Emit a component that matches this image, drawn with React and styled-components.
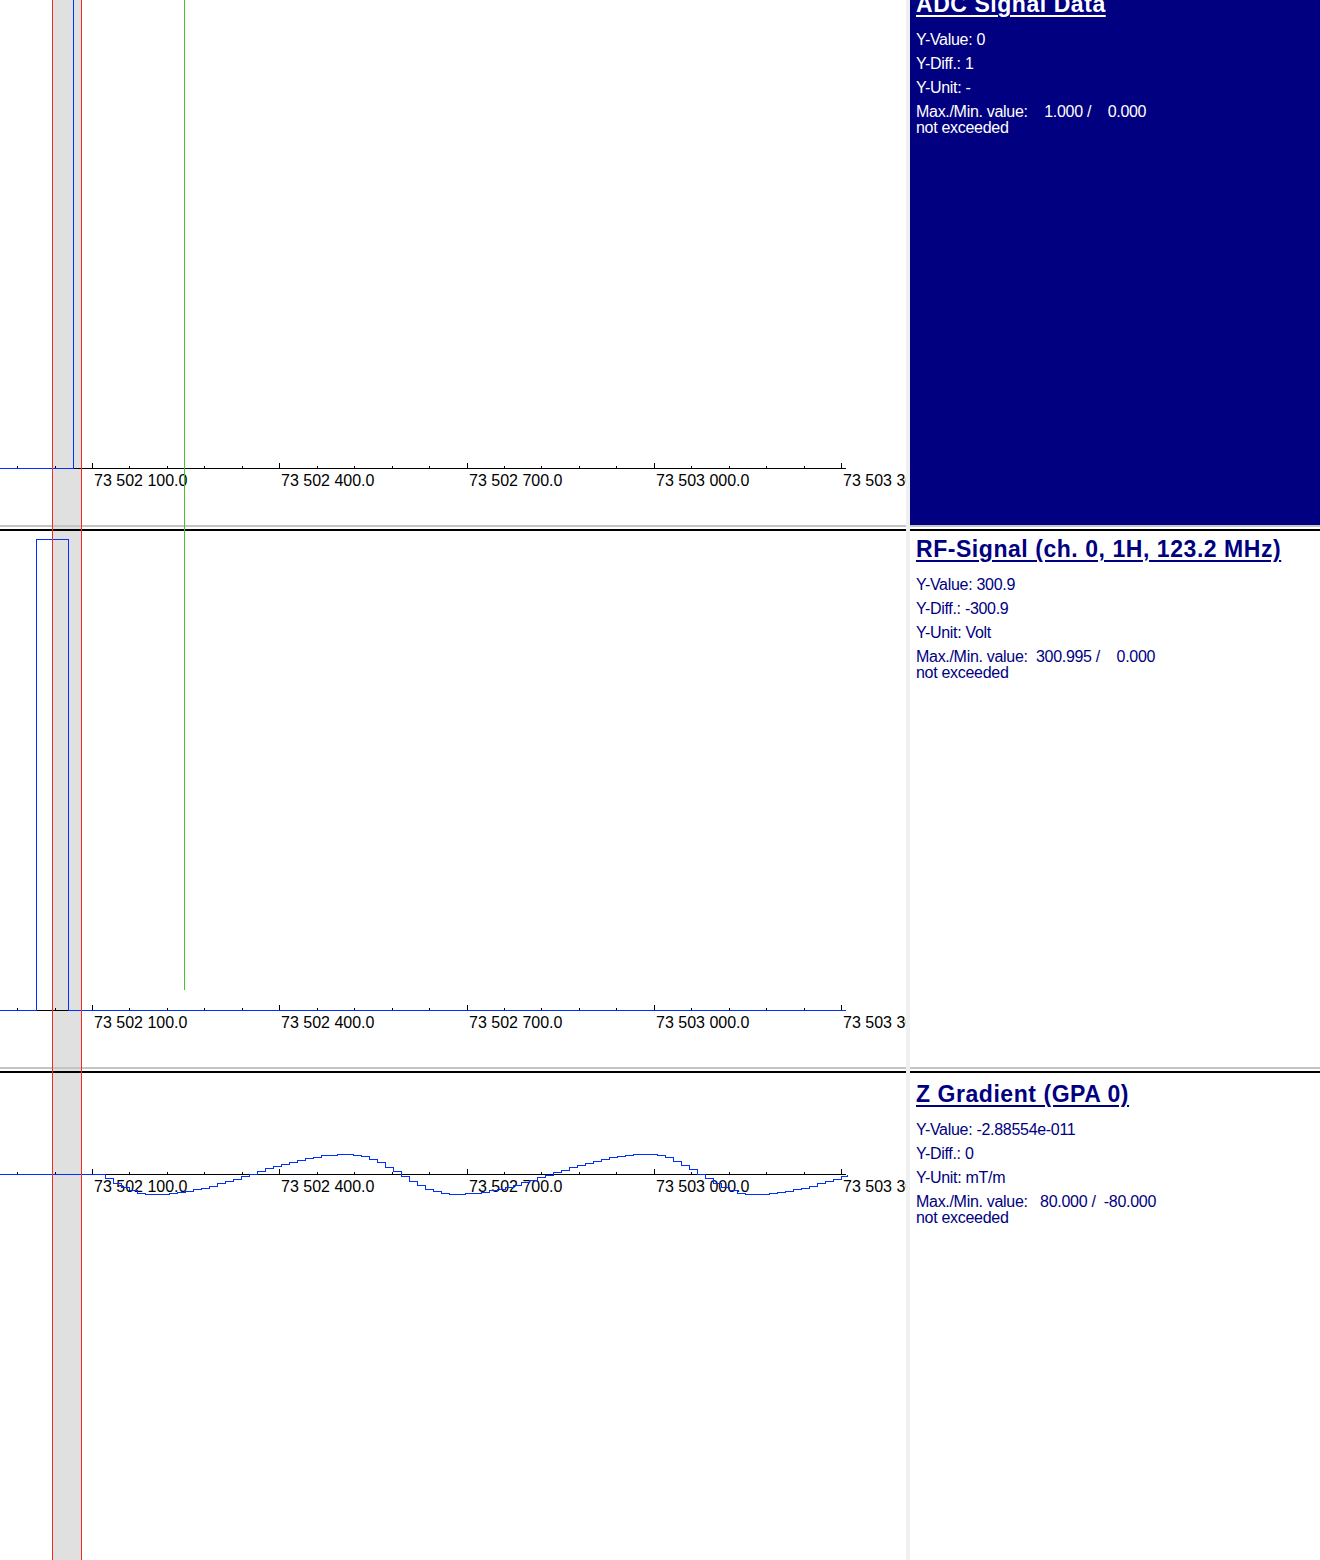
import React from 'react'
import styled, { createGlobalStyle } from 'styled-components'

const GlobalStyle = createGlobalStyle`
  html, body {
    margin: 0;
    padding: 0;
    background: #ffffff;
  }
  body {
    font-family: 'Liberation Sans', Arial, sans-serif;
  }
`

const NAVY = '#000080'
const SIGNAL = '#0030ff'

const Screen = styled.div`
  display: flex;
  width: 1320px;
  height: 1560px;
  overflow: hidden;
  background: #ffffff;
`

const PlotColumn = styled.div`
  position: relative;
  display: flex;
  flex-direction: column;
  width: 906px;
  flex: none;
  overflow: hidden;
  background: #ffffff;
`

const Splitter = styled.div`
  width: 4px;
  flex: none;
  background: #f0f0f0;
`

const InfoColumn = styled.div`
  display: flex;
  flex-direction: column;
  flex: 1;
  background: #ffffff;
`

const CursorBand = styled.div`
  position: absolute;
  top: 0;
  bottom: 0;
  left: 53px;
  width: 28px;
  background: #e0e0e0;
  z-index: 0;
`

const CursorLine = styled.div`
  position: absolute;
  top: 0;
  left: ${p => p.$x}px;
  width: 1px;
  height: ${p => (p.$h ? `${p.$h}px` : '100%')};
  background: ${p => p.$color};
  z-index: 2;
`

const PlotPane = styled.div`
  position: relative;
  z-index: 1;
  height: ${p => (p.$h ? `${p.$h}px` : 'auto')};
  flex: ${p => (p.$h ? 'none' : '1')};
  overflow: hidden;
`

const Separator = styled.div`
  position: relative;
  z-index: 1;
  height: 2px;
  flex: none;
  border-top: 2px solid #c4c4c4;
  border-bottom: 2px solid #000000;
`

const ChartSvg = styled.svg`
  display: block;
`

const AxisLabel = styled.text`
  font-family: 'Liberation Sans', Arial, sans-serif;
  font-size: 16px;
  fill: #000000;
`

const InfoPane = styled.div`
  height: ${p => (p.$h ? `${p.$h}px` : 'auto')};
  flex: ${p => (p.$h ? 'none' : '1')};
  overflow: hidden;
  box-sizing: border-box;
  padding: 0 6px;
  background: ${p => (p.$active ? NAVY : '#ffffff')};
  color: ${p => (p.$active ? '#ffffff' : NAVY)};
`

const InfoTitle = styled.h2`
  margin: ${p => p.$top}px 0 15px;
  font-size: 23px;
  line-height: 26px;
  font-weight: 700;
  letter-spacing: 0.55px;
  text-decoration: underline;
  text-decoration-thickness: 2px;
  text-underline-offset: 3px;
  white-space: nowrap;
`

const InfoList = styled.div`
  display: flex;
  flex-direction: column;
  gap: 8px;
`

const InfoLine = styled.div`
  font-size: 16px;
  line-height: 16px;
  letter-spacing: -0.3px;
  white-space: pre;
`

const labels = ['73 502 100.0', '73 502 400.0', '73 502 700.0', '73 503 000.0', '73 503 300.0']

function TimeAxis({ y }) {
  const ticks = []
  for (let i = -2; i <= 20; i++) {
    const x = Math.round(92 + i * 37.45) + 0.5
    const major = i % 5 === 0
    ticks.push(<line key={i} x1={x} x2={x} y1={y + 0.5} y2={y + 0.5 - (major ? 6 : 3)} stroke="#000" />)
  }
  return (
    <g>
      <line x1="0" x2="846" y1={y + 0.5} y2={y + 0.5} stroke="#000" />
      {ticks}
      {labels.map((t, i) => (
        <AxisLabel key={t} x={Math.round(92 + i * 187.25) + 2} y={y + 18}>{t}</AxisLabel>
      ))}
    </g>
  )
}

function Chart({ height, axisY, signal }) {
  return (
    <ChartSvg width="906" height={height} shapeRendering="crispEdges">
      <TimeAxis y={axisY} />
      <path d={signal} fill="none" stroke={SIGNAL} strokeWidth="1" />
    </ChartSvg>
  )
}

// gradient wave: slow rise over 195px, fast fall over 105px
function gradY(x, axis) {
  const p = (((x - 150) % 300) + 300) % 300
  const v = p < 195 ? -Math.cos((Math.PI * p) / 195) : Math.cos((Math.PI * (p - 195)) / 105)
  return Math.round(axis - 20 * v) + 0.5
}

function gradientPath(axis) {
  let d = `M0 ${axis + 0.5} H97`
  for (let x = 97; x <= 841; x += 8) {
    d += ` H${x} V${gradY(x, axis)}`
  }
  d += ` H847 V${axis + 0.5}`
  return d
}

const channels = [
  {
    title: 'ADC Signal Data', value: '0', diff: '1', unit: '-',
    range: 'Max./Min. value:    1.000 /    0.000', active: true, top: -9, h: 525,
  },
  {
    title: 'RF-Signal (ch. 0, 1H, 123.2 MHz)', value: '300.9', diff: '-300.9', unit: 'Volt',
    range: 'Max./Min. value:  300.995 /    0.000', top: 5, h: 536,
  },
  {
    title: 'Z Gradient (GPA 0)', value: '-2.88554e-011', diff: '0', unit: 'mT/m',
    range: 'Max./Min. value:   80.000 /  -80.000', top: 8,
  },
]

function ChannelInfo({ ch }) {
  return (
    <InfoPane $h={ch.h} $active={ch.active}>
      <InfoTitle $top={ch.top}>{ch.title}</InfoTitle>
      <InfoList>
        <InfoLine>Y-Value: {ch.value}</InfoLine>
        <InfoLine>Y-Diff.: {ch.diff}</InfoLine>
        <InfoLine>Y-Unit: {ch.unit}</InfoLine>
        <InfoLine>{ch.range}{'\n'}not exceeded</InfoLine>
      </InfoList>
    </InfoPane>
  )
}

export default function App() {
  return (
    <>
      <GlobalStyle />
      <Screen>
        <PlotColumn>
          <CursorBand />
          <CursorLine $x={52} $color="#f52a1e" />
          <CursorLine $x={81} $color="#f52a1e" />
          <CursorLine $x={184} $h={990} $color="#44c430" />
          <PlotPane $h={525}>
            <Chart height={525} axisY={468} signal="M0 468.5 H73.5 V0" />
          </PlotPane>
          <Separator />
          <PlotPane $h={536}>
            <Chart height={536} axisY={479} signal="M0 479.5 H36.5 V8.5 H68.5 V479.5 H846" />
          </PlotPane>
          <Separator />
          <PlotPane>
            <Chart height={487} axisY={101} signal={gradientPath(101)} />
          </PlotPane>
        </PlotColumn>
        <Splitter />
        <InfoColumn>
          <ChannelInfo ch={channels[0]} />
          <Separator />
          <ChannelInfo ch={channels[1]} />
          <Separator />
          <ChannelInfo ch={channels[2]} />
        </InfoColumn>
      </Screen>
    </>
  )
}
